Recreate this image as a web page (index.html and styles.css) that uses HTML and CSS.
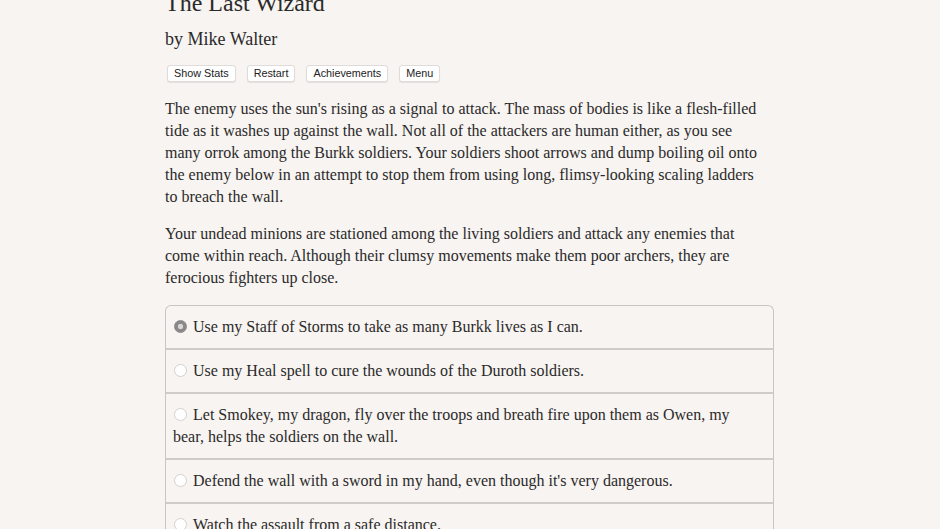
FILE: index.html
```html
<!DOCTYPE html>
<html>
<head>
<meta charset="utf-8">
<link rel="stylesheet" href="styles.css">
</head>
<body>
<div class="page">
  <h1 class="title">The Last Wizard</h1>
  <h2 class="author">by Mike Walter</h2>
  <div class="buttons">
    <button class="btn">Show Stats</button>
    <button class="btn">Restart</button>
    <button class="btn">Achievements</button>
    <button class="btn">Menu</button>
  </div>
  <p class="para">The enemy uses the sun's rising as a signal to attack. The mass of bodies is like a flesh-filled<br>tide as it washes up against the wall. Not all of the attackers are human either, as you see<br>many orrok among the Burkk soldiers. Your soldiers shoot arrows and dump boiling oil onto<br>the enemy below in an attempt to stop them from using long, flimsy-looking scaling ladders<br>to breach the wall.</p>
  <p class="para">Your undead minions are stationed among the living soldiers and attack any enemies that<br>come within reach. Although their clumsy movements make them poor archers, they are<br>ferocious fighters up close.</p>
  <div class="choices">
    <div class="choice"><span class="radio checked"></span>Use my Staff of Storms to take as many Burkk lives as I can.</div>
    <div class="choice"><span class="radio"></span>Use my Heal spell to cure the wounds of the Duroth soldiers.</div>
    <div class="choice"><span class="radio"></span>Let Smokey, my dragon, fly over the troops and breath fire upon them as Owen, my<br>bear, helps the soldiers on the wall.</div>
    <div class="choice"><span class="radio"></span>Defend the wall with a sword in my hand, even though it's very dangerous.</div>
    <div class="choice"><span class="radio"></span>Watch the assault from a safe distance.</div>
  </div>
</div>
</body>
</html>
```
FILE: styles.css
```css
html, body {
  margin: 0;
  padding: 0;
  background: #f7f4f2;
  overflow: hidden;
}
.page {
  width: 609px;
  margin-left: 165px;
  font-family: "Liberation Serif", serif;
  color: #2b2a29;
  font-size: 16px;
  line-height: 22px;
}
.title {
  font-size: 24px;
  font-weight: normal;
  line-height: 30px;
  margin: -12px 0 0 0;
}
.author {
  font-size: 18px;
  font-weight: normal;
  line-height: 24px;
  margin: 9px 0 0 0;
}
.buttons {
  display: flex;
  margin: 14px 0 0 2px;
}
.btn {
  font-family: "Liberation Sans", sans-serif;
  font-size: 10.8px;
  color: #222;
  background: #fff;
  border: 1px solid #dedbd9;
  border-radius: 3px;
  box-shadow: 0 1px 1px rgba(0,0,0,0.08);
  height: 17px;
  padding: 0 6px;
  margin-right: 11px;
  line-height: 15px;
}
.para {
  margin: 16px 0 0 0;
}
.para + .para {
  margin-top: 15px;
}
.choices {
  margin-top: 16px;
  border: 1px solid #c9c5c3;
  border-radius: 6px 6px 0 0;
  border-bottom: none;
}
.choice {
  padding: 10px 7px;
  border-bottom: 2px solid #cfcbc9;
}
.choice:last-child {
  border-bottom: none;
}
.radio {
  display: inline-block;
  width: 11px;
  height: 11px;
  border-radius: 50%;
  border: 1px solid #d4d0ce;
  background: #fff;
  vertical-align: -1px;
  margin: 0 6px 0 1px;
  box-sizing: content-box;
}
.radio.checked {
  background: radial-gradient(circle, #d8d6d4 0 2.5px, #8a8888 3px);
  border-color: #8a8888;
}
```
